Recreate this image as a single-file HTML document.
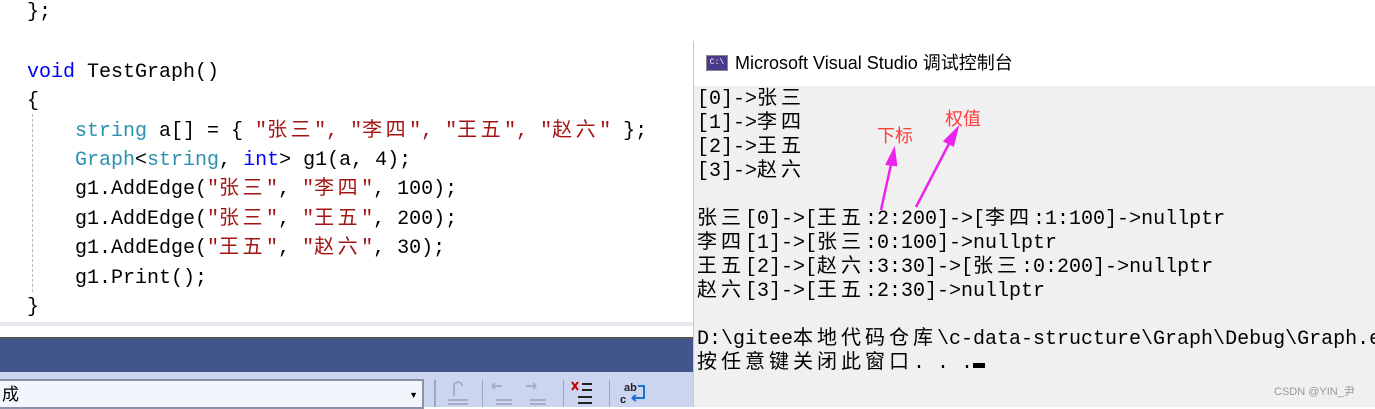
<!DOCTYPE html>
<html><head><meta charset="utf-8"><style>
*{margin:0;padding:0;box-sizing:border-box}
body{width:1375px;height:407px;overflow:hidden;background:#fff;position:relative;font-family:"Liberation Mono","Noto Sans CJK SC",monospace}
.code{position:absolute;left:0;top:0;width:693px;height:322px;background:#fff}
.l{position:absolute;white-space:pre;font-size:20px;line-height:29px;color:#000;font-family:"Liberation Mono","Noto Sans CJK SC",monospace;letter-spacing:0px}
.k{color:#0000ff}.t{color:#2b91af}.s{color:#a31515}.c{letter-spacing:3.5px}
.con{position:absolute;left:693px;top:41px;width:682px;height:366px;background:#f0f0f0;border-left:1px solid #c8c8c8}
.title{position:absolute;left:0;top:0;width:682px;height:45px;background:#fff;font-family:"Liberation Sans","Noto Sans CJK SC",sans-serif;font-size:18px;line-height:45px;padding-left:41px;color:#000}
.ic{position:absolute;left:12px;top:14px;width:22px;height:16px;background:#4b3a8c;border:1px solid #888;color:#fff;font-size:8px;line-height:14px;text-align:center;font-family:"Liberation Mono",monospace}
.cl{position:absolute;left:3px;white-space:pre;font-size:20px;line-height:24px;color:#000;font-family:"Liberation Mono","Noto Sans CJK SC",monospace}
.cl span{letter-spacing:4px}
</style></head><body>
<div class="code">
<div class="l" style="left:27px;top:-2px">};</div>
<div class="l" style="left:27px;top:58px"><span class="k">void</span> TestGraph()</div>
<div class="l" style="left:27px;top:87px">{</div>
<div class="l" style="left:75px;top:117px"><span class="t">string</span> a[] = { <span class="s">"<span class="c">张三</span>", "<span class="c">李四</span>", "<span class="c">王五</span>", "<span class="c">赵六</span>"</span> };</div>
<div class="l" style="left:75px;top:146px"><span class="t">Graph</span>&lt;<span class="t">string</span>, <span class="k">int</span>&gt; g1(a, 4);</div>
<div class="l" style="left:75px;top:175px">g1.AddEdge(<span class="s">"<span class="c">张三</span>"</span>, <span class="s">"<span class="c">李四</span>"</span>, 100);</div>
<div class="l" style="left:75px;top:205px">g1.AddEdge(<span class="s">"<span class="c">张三</span>"</span>, <span class="s">"<span class="c">王五</span>"</span>, 200);</div>
<div class="l" style="left:75px;top:234px">g1.AddEdge(<span class="s">"<span class="c">王五</span>"</span>, <span class="s">"<span class="c">赵六</span>"</span>, 30);</div>
<div class="l" style="left:75px;top:264px">g1.Print();</div>
<div class="l" style="left:27px;top:293px">}</div>
<div style="position:absolute;left:32px;top:114px;height:178px;border-left:1px dashed #bbb"></div>
</div>
<div style="position:absolute;left:0;top:322px;width:693px;height:4px;background:#e8e8ee"></div>
<div style="position:absolute;left:0;top:337px;width:693px;height:2px;background:#555"></div>
<div style="position:absolute;left:0;top:339px;width:693px;height:33px;background:#40568c"></div>
<div style="position:absolute;left:0;top:372px;width:693px;height:35px;background:#ccd5f0"></div>
<div style="position:absolute;left:-2px;top:379px;width:426px;height:30px;background:#f2f5fc;border:2px solid #8a93a8;font-family:'Liberation Sans','Noto Sans CJK SC',sans-serif;font-size:17px;line-height:28px;padding-left:2px">成<span style="position:absolute;right:4px;top:0;font-size:9px">▼</span></div>
<div style="position:absolute;left:434px;top:380px;width:2px;height:27px;background:#9aa6c6"></div>
<div style="position:absolute;left:482px;top:380px;width:1px;height:27px;background:#9aa6c6"></div>
<div style="position:absolute;left:563px;top:380px;width:1px;height:27px;background:#9aa6c6"></div>
<div style="position:absolute;left:609px;top:380px;width:1px;height:27px;background:#9aa6c6"></div>
<svg style="position:absolute;left:440px;top:378px" width="250" height="29">
<g stroke="#a6aec4" stroke-width="2" fill="none"><path d="M8 22h20M8 26h20M14 18v-10a4 4 0 0 1 8 0"/><path d="M56 22h16M56 26h16M52 8h10M52 8l3-3M52 8l3 3"/><path d="M90 22h16M90 26h16M86 8h10M96 8l-3-3M96 8l-3 3"/></g>
<g stroke="#222" stroke-width="2"><path d="M142 6h10M142 12h10M138 19h14M138 25h14"/></g>
<path d="M132 4l6 8M138 4l-6 8" stroke="#c00" stroke-width="2"/>
<text x="184" y="13" font-size="11" font-family="Liberation Sans" font-weight="bold" fill="#222">ab</text>
<text x="180" y="25" font-size="11" font-family="Liberation Sans" font-weight="bold" fill="#222">c</text>
<path d="M198 8h6v12h-12M192 20l4-3M192 20l4 3" stroke="#1e6fd0" stroke-width="2" fill="none"/>
</svg>
<div class="con">
<div class="title"><div class="ic">C:\</div>Microsoft Visual Studio 调试控制台</div>
<div class="cl" style="top:47px">[0]-&gt;<span>张三</span></div>
<div class="cl" style="top:71px">[1]-&gt;<span>李四</span></div>
<div class="cl" style="top:95px">[2]-&gt;<span>王五</span></div>
<div class="cl" style="top:119px">[3]-&gt;<span>赵六</span></div>
<div class="cl" style="top:167px"><span>张三</span>[0]-&gt;[<span>王五</span>:2:200]-&gt;[<span>李四</span>:1:100]-&gt;nullptr</div>
<div class="cl" style="top:191px"><span>李四</span>[1]-&gt;[<span>张三</span>:0:100]-&gt;nullptr</div>
<div class="cl" style="top:215px"><span>王五</span>[2]-&gt;[<span>赵六</span>:3:30]-&gt;[<span>张三</span>:0:200]-&gt;nullptr</div>
<div class="cl" style="top:239px"><span>赵六</span>[3]-&gt;[<span>王五</span>:2:30]-&gt;nullptr</div>
<div class="cl" style="top:287px">D:\gitee<span>本地代码仓库</span>\c-data-structure\Graph\Debug\Graph.exe</div>
<div class="cl" style="top:311px"><span>按任意键关闭此窗口</span>. . .<span style="display:inline-block;width:12px;height:5px;background:#000;letter-spacing:0"></span></div>
<div style="position:absolute;left:580px;top:342px;font-family:'Liberation Sans','Noto Sans CJK SC',sans-serif;font-size:11px;color:#999">CSDN @YIN_尹</div>
</div>
<div style="position:absolute;left:877px;top:122px;font-family:'Liberation Sans','Noto Sans CJK SC',sans-serif;font-size:18px;color:#ff3b3b">下标</div>
<div style="position:absolute;left:945px;top:105px;font-family:'Liberation Sans','Noto Sans CJK SC',sans-serif;font-size:18px;color:#ff3b3b">权值</div>
<svg style="position:absolute;left:0;top:0" width="1375" height="407">
<g stroke="#ee22ee" stroke-width="2.5" fill="#ee22ee">
<path d="M881 210L892 160"/><path d="M894 150l-7 14 9 1z"/>
<path d="M916 207L952 138"/><path d="M957 129l-12 12 8 4z"/>
</g></svg>
</body></html>
